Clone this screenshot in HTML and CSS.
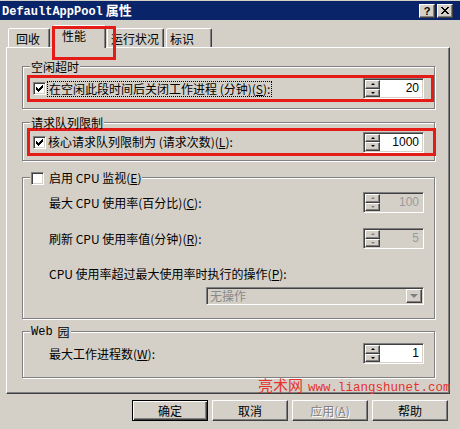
FILE: index.html
```html
<!DOCTYPE html>
<html lang="zh-CN">
<head>
<meta charset="utf-8">
<title>DefaultAppPool 属性</title>
<link rel="stylesheet" href="styles.css">
</head>
<body>
<div class="titlebar">
  <div class="title"><span class="mono">DefaultAppPool</span> 属性</div>
  <div class="tbtns">
    <div class="tbtn help">?</div>
    <div class="tbtn close"><svg width="8" height="7" viewBox="0 0 8 7" shape-rendering="crispEdges"><path d="M0 0h2v1H0z M6 0h2v1H6z M1 1h2v1H1z M5 1h2v1H5z M2 2h4v1H2z M3 3h2v1H3z M2 4h4v1H2z M1 5h2v1H1z M5 5h2v1H5z M0 6h2v1H0z M6 6h2v1H6z" fill="#000"/></svg></div>
  </div>
</div>

<div class="tabs">
  <div class="tab t1">回收</div>
  <div class="tab t2 sel">性能</div>
  <div class="tab t3">运行状况</div>
  <div class="tab t4">标识</div>
</div>

<div class="panel">
  <div class="group g1">
    <div class="legend">空闲超时</div>
    <div class="mark mark1">
      <div class="cb"><svg width="7" height="7" viewBox="0 0 7 7" shape-rendering="crispEdges"><path d="M6 0h1v1H6z M5 1h2v1H5z M0 2h1v1H0z M4 2h3v1H4z M0 3h2v1H0z M3 3h3v1H3z M0 4h5v1H0z M1 5h3v1H1z M2 6h1v1H2z" fill="#000"/></svg></div>
      <div class="lbl focus">在空闲此段时间后关闭工作进程 (分钟)(<u>S</u>):</div>
      <div class="spin sp1"><div class="sbtns"><div class="sb"><i class="up"></i></div><div class="sb"><i class="dn"></i></div></div><div class="sval">20</div></div>
    </div>
  </div>

  <div class="group g2">
    <div class="legend">请求队列限制</div>
    <div class="mark mark2">
      <div class="cb"><svg width="7" height="7" viewBox="0 0 7 7" shape-rendering="crispEdges"><path d="M6 0h1v1H6z M5 1h2v1H5z M0 2h1v1H0z M4 2h3v1H4z M0 3h2v1H0z M3 3h3v1H3z M0 4h5v1H0z M1 5h3v1H1z M2 6h1v1H2z" fill="#000"/></svg></div>
      <div class="lbl">核心请求队列限制为 (请求次数)(<u>L</u>):</div>
      <div class="spin sp2"><div class="sbtns"><div class="sb"><i class="up"></i></div><div class="sb"><i class="dn"></i></div></div><div class="sval">1000</div></div>
    </div>
  </div>

  <div class="group g3">
    <div class="legend lg-cb"><div class="cb"></div><span>启用 CPU 监视(<u>E</u>)</span></div>
    <div class="row r1">
      <div class="lbl">最大 CPU 使用率(百分比)(<u>C</u>):</div>
      <div class="spin dis"><div class="sbtns"><div class="sb"><i class="up"></i></div><div class="sb"><i class="dn"></i></div></div><div class="sval">100</div></div>
    </div>
    <div class="row r2">
      <div class="lbl">刷新 CPU 使用率值(分钟)(<u>R</u>):</div>
      <div class="spin dis"><div class="sbtns"><div class="sb"><i class="up"></i></div><div class="sb"><i class="dn"></i></div></div><div class="sval">5</div></div>
    </div>
    <div class="row3">CPU 使用率超过最大使用率时执行的操作(<u>P</u>):</div>
    <div class="select"><div class="stxt">无操作</div><div class="dd"><i class="ddarrow"></i></div></div>
  </div>

  <div class="group g4">
    <div class="legend"><span class="web">Web</span><span>园</span></div>
    <div class="row r4">
      <div class="lbl">最大工作进程数(<u>W</u>):</div>
      <div class="spin"><div class="sbtns"><div class="sb"><i class="up"></i></div><div class="sb"><i class="dn"></i></div></div><div class="sval">1</div></div>
    </div>
  </div>
</div>

<div class="btns">
  <div class="btn def">确定</div>
  <div class="btn">取消</div>
  <div class="btn dis">应用(<u>A</u>)</div>
  <div class="btn">帮助</div>
</div>

<div class="watermark">亮术网<span class="wm-url">www.liangshunet.com</span></div>
</body>
</html>
```

FILE: styles.css
```css
* { box-sizing: border-box; margin: 0; padding: 0; }

body {
  margin: 0;
  width: 460px;
  height: 429px;
  overflow: hidden;
  position: relative;
  background: #d4d0c8;
  color: #000;
  font-family: "Noto Sans CJK SC", "Noto Sans", sans-serif;
  font-size: 12px;
  line-height: 14px;
}

u { text-decoration: underline; text-underline-offset: 1px; }

/* title bar */
.titlebar {
  margin-top: 1px;
  height: 19px;
  background: #0a246a;
  color: #fff;
  display: flex;
  align-items: center;
  justify-content: space-between;
  padding: 0 7px 0 2px;
}
.title { font-weight: bold; font-size: 13px; white-space: nowrap; }
.mono { font-family: "Liberation Mono", monospace; font-size: 12px; }
.tbtns { display: flex; gap: 2px; }
.tbtn {
  width: 16px;
  height: 14px;
  background: #d4d0c8;
  color: #000;
  border: 1px solid;
  border-color: #fff #404040 #404040 #fff;
  box-shadow: inset -1px -1px #808080;
  display: flex;
  align-items: center;
  justify-content: center;
  font: bold 11px/12px "Liberation Sans", sans-serif;
}

/* tabs */
.tabs {
  display: flex;
  align-items: flex-end;
  height: 22px;
  margin-top: 5px;
  padding-left: 8px;
}
.tab {
  height: 19px;
  padding-top: 3px;
  border: 1px solid;
  border-bottom: none;
  border-color: #fff #404040 transparent #fff;
  box-shadow: inset -1px 0 #808080;
  border-radius: 2px 2px 0 0;
  white-space: nowrap;
  background: #d4d0c8;
}
.t1 { width: 42px; padding-left: 7px; }
.t2 { width: 53px; padding-left: 8px; margin-left: 3px; }
.t3 { width: 57px; padding-left: 3px; margin-left: 1px; }
.t4 { width: 46px; padding-left: 3px; margin-left: 2px; }
.tab.sel {
  height: 23px;
  margin-bottom: -1px;
  position: relative;
  z-index: 1;
}
.tab.sel::after {
  content: "";
  position: absolute;
  left: -2px;
  top: 0;
  width: 58px;
  height: 28px;
  border: 3px solid #e41b17;
}

/* panel */
.panel {
  margin-left: 6px;
  width: 444px;
  height: 347px;
  border: 1px solid;
  border-color: #fff #404040 #404040 #fff;
  box-shadow: inset -1px -1px #808080;
  padding: 18px 14px 0 15px;
}

.group {
  border: 1px solid #808080;
  box-shadow: inset 1px 1px #fff, 1px 1px #fff;
}
.legend {
  display: flex;
  align-items: center;
  gap: 5px;
  width: max-content;
  height: 14px;
  margin: -7px 0 0 7px;
  padding: 0 1px;
  background: #d4d0c8;
  white-space: nowrap;
}
.g3 .legend, .g4 .legend { margin-left: -19px; }
.web { font-family: "Liberation Mono", monospace; font-size: 12px; }
.g1 { padding-bottom: 6px; }
.g2 { margin-top: 13px; padding-bottom: 4px; }
.g3 { margin-top: 16px; padding: 0 10px 13px 26px; }
.g4 { margin-top: 12px; padding: 0 10px 13px 26px; }

/* red annotation rows */
.mark {
  display: flex;
  align-items: center;
  border: 3px solid #e41b17;
}
.mark1 { height: 27px; margin: 1px 0 0 4px; }
.mark2 { height: 28px; margin: -2px -2px 0 4px; }
.mark .cb { margin-left: 3px; }
.mark .lbl { margin-left: 2px; }
.sp1 { margin-right: 7px; }
.sp2 { margin-right: 9px; }

.lbl { white-space: nowrap; }
.focus { outline: 1px dotted #000; padding: 0 1px; }

/* checkbox */
.cb {
  width: 13px;
  height: 13px;
  flex: none;
  background: #fff;
  border: 1px solid;
  border-color: #808080 #fff #fff #808080;
  box-shadow: inset 1px 1px #404040, inset -1px -1px #d4d0c8;
  display: flex;
  align-items: center;
  justify-content: center;
}

/* spinner */
.spin {
  display: flex;
  width: 61px;
  height: 21px;
  margin-left: auto;
  flex: none;
  padding: 1px;
  background: #fff;
  border: 1px solid;
  border-color: #808080 #fff #fff #808080;
  box-shadow: inset 1px 1px #404040, inset -1px -1px #d4d0c8;
}
.sbtns { width: 15px; display: flex; flex-direction: column; }
.sb {
  flex: 1;
  background: #d4d0c8;
  border: 1px solid;
  border-color: #fff #404040 #404040 #fff;
  box-shadow: inset -1px -1px #808080;
  display: flex;
  align-items: center;
  justify-content: center;
}
.up, .dn { display: block; width: 0; height: 0; border-left: 2px solid transparent; border-right: 2px solid transparent; }
.up { border-bottom: 2px solid #000; }
.dn { border-top: 2px solid #000; }
.sval {
  flex: 1;
  text-align: right;
  padding-right: 3px;
  font: 12px/17px "Liberation Sans", sans-serif;
}
.spin.dis { background: #d4d0c8; }
.spin.dis .sval { color: #9a9a9a; }
.spin.dis .up { border-bottom-color: #808080; }
.spin.dis .dn { border-top-color: #808080; }

/* cpu rows */
.row { display: flex; align-items: center; height: 21px; }
.r1 { margin-top: 7px; }
.r2 { margin-top: 15px; }
.r4 { margin-top: 4px; }
.row3 { margin-top: 18px; height: 14px; white-space: nowrap; }

.select {
  display: flex;
  width: 218px;
  height: 18px;
  margin: 6px 0 0 auto;
  padding: 1px;
  background: #d4d0c8;
  border: 1px solid;
  border-color: #808080 #fff #fff #808080;
  box-shadow: inset 1px 1px #404040, inset -1px -1px #d4d0c8;
}
.stxt { flex: 1; color: #8a8a8a; padding-left: 2px; line-height: 14px; }
.dd {
  width: 16px;
  background: #d4d0c8;
  border: 1px solid;
  border-color: #fff #404040 #404040 #fff;
  box-shadow: inset -1px -1px #808080;
  display: flex;
  align-items: center;
  justify-content: center;
}
.ddarrow { display: block; width: 0; height: 0; border-left: 4px solid transparent; border-right: 4px solid transparent; border-top: 4px solid #808080; }

/* buttons */
.btns {
  display: flex;
  justify-content: flex-end;
  gap: 4px;
  margin-top: 6px;
  padding-right: 12px;
}
.btn {
  width: 76px;
  height: 21px;
  border: 1px solid;
  border-color: #fff #404040 #404040 #fff;
  box-shadow: inset -1px -1px #808080;
  display: flex;
  align-items: center;
  justify-content: center;
  white-space: nowrap;
}
.btn.def {
  border-color: #000;
  box-shadow: inset 1px 1px #fff, inset -1px -1px #404040, inset -2px -2px #808080;
}
.btn.dis { color: #808080; text-shadow: 1px 1px #fff; }

/* watermark overlay */
.watermark {
  position: absolute;
  left: 258px;
  top: 377px;
  color: #e5322d;
  font-size: 15px;
  line-height: 16px;
  white-space: nowrap;
}
.wm-url {
  margin-left: 5px;
  font-family: "Liberation Mono", monospace;
  font-size: 12.5px;
}
```
